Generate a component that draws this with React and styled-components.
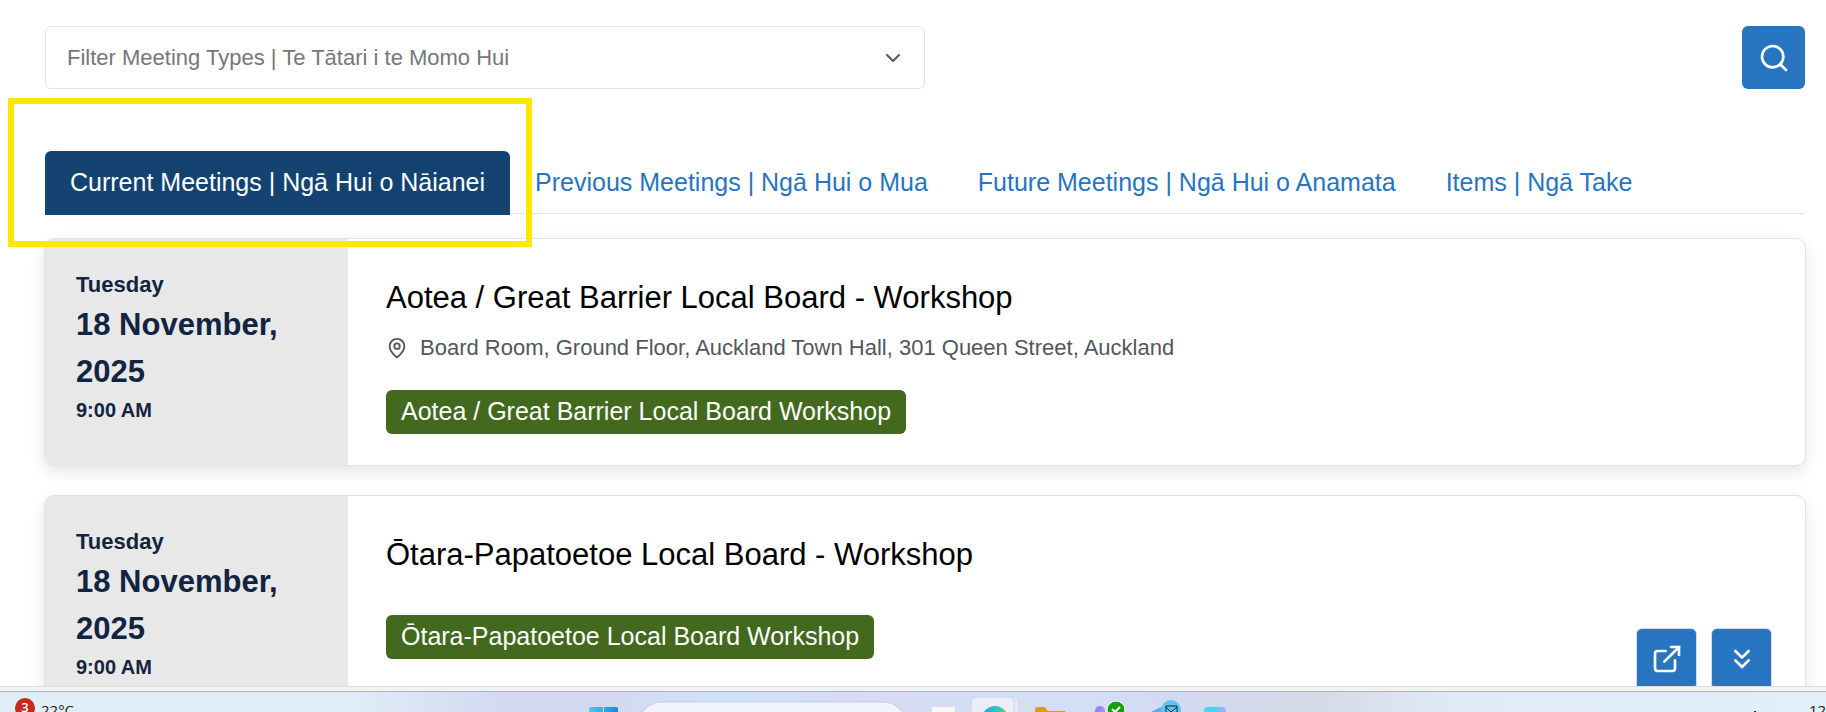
import React from "react";
import styled, { createGlobalStyle, css } from "styled-components";
import {
  ChevronDown,
  ChevronsDown,
  ExternalLink,
  MapPin,
  Search
} from "lucide-react";

const GlobalStyle = createGlobalStyle`
  *, *::before, *::after {
    box-sizing: border-box;
  }

  body {
    margin: 0;
    background: #fff;
    color: #000;
    font-family: "Liberation Sans", Arial, sans-serif;
  }

  button, select {
    font-family: inherit;
  }
`;

const Screen = styled.div`
  position: relative;
  display: flex;
  flex-direction: column;
  height: 100vh;
  overflow: hidden;
`;

const Page = styled.main`
  flex: 1;
  min-height: 0;
  overflow: hidden;
  padding: 26px 21px 0 45px;
`;

const FilterBar = styled.form`
  display: flex;
  justify-content: space-between;
  margin-bottom: 62px;
`;

const SelectBox = styled.div`
  display: grid;
  align-items: center;
  width: 50%;

  > * {
    grid-area: 1 / 1;
  }

  > svg {
    justify-self: end;
    margin-right: 20px;
    color: #53565c;
    pointer-events: none;
  }
`;

const Select = styled.select`
  appearance: none;
  width: 100%;
  height: 63px;
  padding: 0 60px 0 21px;
  border: 1px solid #e2e2e2;
  border-radius: 6px;
  background: #fff;
  color: #75777c;
  font-size: 22px;
`;

const SearchButton = styled.button`
  display: flex;
  align-items: center;
  justify-content: center;
  width: 63px;
  height: 63px;
  padding: 0;
  border: 0;
  border-radius: 6px;
  background: #2775c0;
  color: #fff;
`;

const Tabs = styled.nav`
  display: flex;
  height: 63px;
  margin-bottom: 24px;
  border-bottom: 1px solid #e2e2e2;
`;

const Tab = styled.a`
  display: flex;
  align-items: center;
  height: 64px;
  padding: 0 25px 2px;
  border-radius: 6px 6px 0 0;
  color: #2775c0;
  font-size: 25px;
  white-space: nowrap;
  text-decoration: none;

  ${props =>
    props.$active &&
    css`
      background: #144371;
      color: #fff;
    `}
`;

const Meetings = styled.section`
  display: flex;
  flex-direction: column;
  gap: 29px;
  margin: 0 -1px;
`;

const Card = styled.article`
  display: flex;
  min-height: 228px;
  flex-shrink: 0;
  overflow: hidden;
  border: 1px solid #e2e2e2;
  border-radius: 10px;
  background: #fff;
  box-shadow: 0 6px 16px rgba(0, 0, 0, 0.1);
`;

const DatePanel = styled.div`
  flex-shrink: 0;
  width: 303px;
  padding: 30px 31px;
  background: #e8e8e8;
  color: #12243f;
  font-weight: bold;
`;

const Day = styled.div`
  font-size: 22px;
  line-height: 32px;
`;

const DateText = styled.div`
  font-size: 31px;
  line-height: 47px;
`;

const Time = styled.div`
  font-size: 20px;
  line-height: 30px;
`;

const Info = styled.div`
  display: flex;
  flex-direction: column;
  align-items: flex-start;
  padding: 39px 38px 31px;
`;

const Title = styled.h2`
  margin: 0;
  font-size: 31px;
  font-weight: normal;
  line-height: 40px;
`;

const Location = styled.p`
  display: flex;
  align-items: center;
  gap: 12px;
  margin: 14px 0 -14px;
  color: #53565c;
  font-size: 22px;
  line-height: 32px;
`;

const Badge = styled.span`
  margin-top: 40px;
  padding: 0 15px 2px;
  border-radius: 6px;
  background: #42691d;
  color: #fff;
  font-size: 25px;
  line-height: 42px;
`;

const FloatingActions = styled.div`
  position: absolute;
  right: 54px;
  bottom: 22px;
  display: flex;
  gap: 14px;
`;

const FloatingButton = styled.button`
  display: flex;
  align-items: center;
  justify-content: center;
  width: 61px;
  height: 62px;
  padding: 0;
  border: 1px solid #d5dde6;
  border-radius: 6px;
  background: #2775c0;
  color: #fff;
`;

const Highlight = styled.div`
  position: absolute;
  top: 98px;
  left: 8px;
  width: 524px;
  height: 149px;
  border: 6px solid #ffe800;
  pointer-events: none;
`;

const WindowEdge = styled.div`
  position: relative;
  flex-shrink: 0;
  height: 6px;
  border-top: 1px solid #dedede;
  border-bottom: 1px solid #aab4c0;
  background: #f3f3f3;
`;

const Taskbar = styled.footer`
  position: relative;
  display: grid;
  grid-template-columns: 1fr auto 1fr;
  flex-shrink: 0;
  height: 20px;
  overflow: hidden;
  background: linear-gradient(
    90deg,
    #e1eef7 0%,
    #e1edf7 19%,
    #d3daf2 27%,
    #d3daf0 34%,
    #d0e2f9 40%,
    #d6dbf2 46%,
    #d4dff6 58%,
    #d3d9ee 66%,
    #d4dae6 72%,
    #e0ebf7 80%,
    #e2eef8 100%
  );
  color: #222;
  font-family: "Open Sans", "Noto Sans", sans-serif;
  font-size: 15px;
`;

const Weather = styled.div`
  display: flex;
  align-items: flex-start;
  gap: 6px;
  padding: 6px 0 0 15px;
  line-height: 20px;

  > span:last-child {
    padding-top: 2px;
  }
`;

const Alert = styled.span`
  width: 20px;
  height: 20px;
  border-radius: 50%;
  background: #c42b1c;
  color: #fff;
  font-size: 13px;
  font-weight: 600;
  line-height: 18px;
  text-align: center;
`;

const TaskIcons = styled.svg`
  width: 650px;
  height: 20px;
`;

const Tray = styled.div`
  display: flex;
  justify-content: flex-end;
  gap: 48px;
  padding-top: 8px;
  line-height: 20px;
`;

const Chevron = styled.svg`
  width: 12px;
  height: 12px;
`;

const Clock = styled.span`
  width: 17px;
  white-space: nowrap;
`;

const tabs = [
  "Current Meetings | Ngā Hui o Nāianei",
  "Previous Meetings | Ngā Hui o Mua",
  "Future Meetings | Ngā Hui o Anamata",
  "Items | Ngā Take"
];

const meetings = [
  {
    day: "Tuesday",
    date: "18 November, 2025",
    time: "9:00 AM",
    title: "Aotea / Great Barrier Local Board - Workshop",
    location:
      "Board Room, Ground Floor, Auckland Town Hall, 301 Queen Street, Auckland",
    type: "Aotea / Great Barrier Local Board Workshop"
  },
  {
    day: "Tuesday",
    date: "18 November, 2025",
    time: "9:00 AM",
    title: "Ōtara-Papatoetoe Local Board - Workshop",
    type: "Ōtara-Papatoetoe Local Board Workshop"
  }
];

function Meeting({ day, date, time, title, location, type }) {
  return (
    <Card>
      <DatePanel>
        <Day>{day}</Day>
        <DateText>{date}</DateText>
        <Time>{time}</Time>
      </DatePanel>
      <Info>
        <Title>{title}</Title>
        {location && (
          <Location>
            <MapPin size={22} strokeWidth={2} />
            {location}
          </Location>
        )}
        <Badge>{type}</Badge>
      </Info>
    </Card>
  );
}

function PinnedApps() {
  return (
    <TaskIcons viewBox="588 692 650 20" aria-hidden="true">
      <defs>
        <linearGradient id="start">
          <stop offset="0" stopColor="#45cdf8" />
          <stop offset="1" stopColor="#1688d8" />
        </linearGradient>
        <linearGradient id="edge">
          <stop offset="0" stopColor="#2aa5e0" />
          <stop offset="0.5" stopColor="#2dc0c8" />
          <stop offset="1" stopColor="#55d86a" />
        </linearGradient>
        <linearGradient id="teams">
          <stop offset="0" stopColor="#7f86ee" />
          <stop offset="1" stopColor="#b68cf8" />
        </linearGradient>
        <linearGradient id="copilot">
          <stop offset="0" stopColor="#5ccdf6" />
          <stop offset="0.5" stopColor="#40d2ff" />
          <stop offset="1" stopColor="#bba8f6" />
        </linearGradient>
      </defs>
      <path d="M591 707h12v8h-14v-6a2 2 0 0 1 2-2zM604 707h12a2 2 0 0 1 2 2v6h-14z" fill="url(#start)" />
      <rect x="638" y="702" width="269" height="56" rx="24" fill="#f2f5fd" stroke="#c4cbe6" />
      <rect x="932" y="707" width="23" height="12" rx="1" fill="#f7f7f8" />
      <rect x="976" y="697" width="43" height="30" rx="5" fill="#e4e8f6" stroke="#cfd4e6" />
      <rect x="971" y="697" width="43" height="30" rx="5" fill="#ebeef9" stroke="#cfd4e6" />
      <circle cx="995" cy="719" r="13" fill="url(#edge)" />
      <path d="M1035 720v-11a2 2 0 0 1 2-2h8l3 4h17v9z" fill="#dd9d10" />
      <circle cx="1100" cy="711" r="5" fill="url(#teams)" />
      <circle cx="1116" cy="710" r="9" fill="#13a10e" stroke="#fff" />
      <path d="M1112 709l3 3 5-5" fill="none" stroke="#fff" strokeWidth="2" />
      <path d="M1150 713q8-6 16-7v10h-16z" fill="#57aef0" />
      <circle cx="1171" cy="710" r="10" fill="#60c4f3" />
      <path d="M1166 706h11v9h-11zM1166 707l5 5 6-5" fill="none" stroke="#142b40" />
      <rect x="1204" y="707" width="22" height="14" rx="4" fill="url(#copilot)" />
    </TaskIcons>
  );
}

export default function App() {
  return (
    <Screen>
      <GlobalStyle />
      <Page>
        <FilterBar onSubmit={e => e.preventDefault()}>
          <SelectBox>
            <Select aria-label="Filter Meeting Types">
              <option>Filter Meeting Types | Te Tātari i te Momo Hui</option>
            </Select>
            <ChevronDown size={24} />
          </SelectBox>
          <SearchButton type="submit" aria-label="Search">
            <Search size={32} strokeWidth={2} />
          </SearchButton>
        </FilterBar>
        <Tabs>
          {tabs.map((label, i) => (
            <Tab key={label} href="#" $active={i === 0}>
              {label}
            </Tab>
          ))}
        </Tabs>
        <Meetings>
          {meetings.map(meeting => (
            <Meeting key={meeting.title} {...meeting} />
          ))}
        </Meetings>
      </Page>
      <FloatingActions>
        <FloatingButton aria-label="Open in new window">
          <ExternalLink size={32} strokeLinejoin="miter" />
        </FloatingButton>
        <FloatingButton aria-label="Scroll down">
          <ChevronsDown size={32} />
        </FloatingButton>
      </FloatingActions>
      <Highlight />
      <WindowEdge />
      <Taskbar>
        <Weather>
          <Alert>3</Alert>
          <span>22°C</span>
        </Weather>
        <PinnedApps />
        <Tray>
          <Chevron viewBox="0 0 12 12" aria-hidden="true">
            <path d="M2 15l4-4 4 4" fill="none" stroke="#222" />
          </Chevron>
          <Clock>12</Clock>
        </Tray>
      </Taskbar>
    </Screen>
  );
}
